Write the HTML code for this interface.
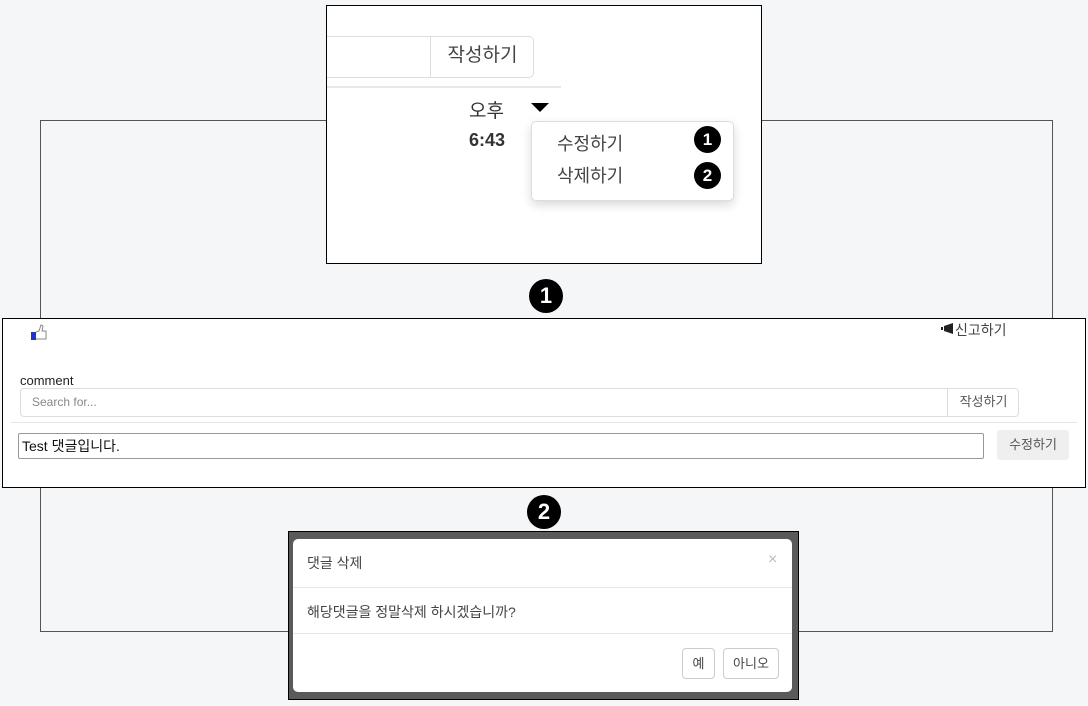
<!DOCTYPE html>
<html><head><meta charset="utf-8"><style>
*{box-sizing:border-box;margin:0;padding:0}
body{width:1088px;height:706px;background:#f5f6f8;position:relative;overflow:hidden;font-family:"Liberation Sans","Noto Sans CJK KR",sans-serif;color:#333}
.a{position:absolute}
.badge{position:absolute;border-radius:50%;background:#000;color:#fff;font-weight:bold;text-align:center;font-family:"Liberation Sans",sans-serif}
</style></head><body>
<div class="a" style="left:40px;top:120px;width:1013px;height:512px;border:1px solid #555"></div>

<div class="a" style="left:326px;top:5px;width:436px;height:259px;background:#fff;border:1px solid #000;overflow:hidden">
  <div class="a" style="left:-20px;top:30px;width:227px;height:42px;border:1px solid #ddd;border-radius:5px"></div>
  <div class="a" style="left:103px;top:30px;width:104px;height:42px;border-left:1px solid #ddd;font-size:19px;line-height:40px;text-align:center;color:#444">작성하기</div>
  <div class="a" style="left:0;top:80px;width:234px;height:2px;background:#e8e8e8"></div>
  <div class="a" style="left:142px;top:90px;font-size:19px;color:#333">오후</div>
  <div class="a" style="left:204px;top:97px;width:0;height:0;border-left:9px solid transparent;border-right:9px solid transparent;border-top:9px solid #000"></div>
  <div class="a" style="left:142px;top:124px;font-size:18px;font-weight:bold;color:#333">6:43</div>
  <div class="a" style="left:204px;top:115px;width:203px;height:80px;border:1px solid #ddd;border-radius:5px;background:#fff;box-shadow:0 4px 10px rgba(0,0,0,.15)">
    <div class="a" style="left:25px;top:8px;font-size:18px;color:#444">수정하기</div>
    <div class="a" style="left:25px;top:40px;font-size:18px;color:#444">삭제하기</div>
    <div class="badge" style="left:162px;top:4px;width:27px;height:27px;line-height:27px;font-size:17px">1</div>
    <div class="badge" style="left:162px;top:40px;width:27px;height:27px;line-height:27px;font-size:17px">2</div>
  </div>
</div>

<div class="badge" style="left:529px;top:279px;width:34px;height:34px;line-height:34px;font-size:22px">1</div>

<div class="a" style="left:2px;top:318px;width:1084px;height:170px;background:#fff;border:1px solid #000">
  <svg class="a" style="left:27px;top:4px" width="18" height="18" viewBox="0 0 18 18"><rect x="1" y="9" width="5" height="8" fill="#2233cc"/><path d="M6 9 L9 8 L11 2 L13 3 L12 8 L16 8 L16 16 L6 16" fill="#fff" stroke="#888" stroke-width="1"/></svg>
  <svg class="a" style="left:938px;top:4px" width="14" height="12" viewBox="0 0 14 12"><rect x="0" y="4" width="2" height="3" fill="#222"/><path d="M3 3 L12 0 L12 11 L3 8 Z" fill="#222"/></svg>
  <div class="a" style="left:952px;top:1px;font-size:14px;color:#444">신고하기</div>
  <div class="a" style="left:17px;top:54px;font-size:13px;color:#222">comment</div>
  <div class="a" style="left:17px;top:69px;width:999px;height:29px;border:1px solid #ddd;border-radius:4px"></div>
  <div class="a" style="left:29px;top:76px;font-size:12px;color:#888">Search for...</div>
  <div class="a" style="left:944px;top:69px;width:72px;height:29px;border-left:1px solid #ddd;font-size:13px;line-height:28px;text-align:center;color:#555">작성하기</div>
  <div class="a" style="left:8px;top:103px;width:1066px;height:1px;background:#e6e6e6"></div>
  <div class="a" style="left:15px;top:114px;width:966px;height:26px;border:1px solid #999;border-radius:2px;font-size:14px;line-height:24px;padding-left:3px;color:#111">Test 댓글입니다.</div>
  <div class="a" style="left:994px;top:111px;width:72px;height:30px;background:#efefef;border-radius:3px;font-size:13px;line-height:30px;text-align:center;color:#555">수정하기</div>
</div>

<div class="badge" style="left:527px;top:495px;width:34px;height:34px;line-height:34px;font-size:22px">2</div>

<div class="a" style="left:288px;top:531px;width:511px;height:169px;background:#5a5a5a;border:1px solid #000">
  <div class="a" style="left:4px;top:7px;width:499px;height:153px;background:#fff;border-radius:5px">
    <div class="a" style="left:14px;top:14px;font-size:14px;color:#444">댓글 삭제</div>
    <div class="a" style="left:475px;top:12px;font-size:16px;color:#bbb">×</div>
    <div class="a" style="left:0;top:48px;width:100%;height:1px;background:#e8e8e8"></div>
    <div class="a" style="left:14px;top:63px;font-size:14px;color:#444">해당댓글을 정말삭제 하시겠습니까?</div>
    <div class="a" style="left:0;top:94px;width:100%;height:1px;background:#e8e8e8"></div>
    <div class="a" style="left:389px;top:109px;width:33px;height:31px;border:1px solid #ccc;border-radius:4px;font-size:13px;line-height:29px;text-align:center;color:#444">예</div>
    <div class="a" style="left:430px;top:109px;width:56px;height:31px;border:1px solid #ccc;border-radius:4px;font-size:13px;line-height:29px;text-align:center;color:#444">아니오</div>
  </div>
</div>
</body></html>
